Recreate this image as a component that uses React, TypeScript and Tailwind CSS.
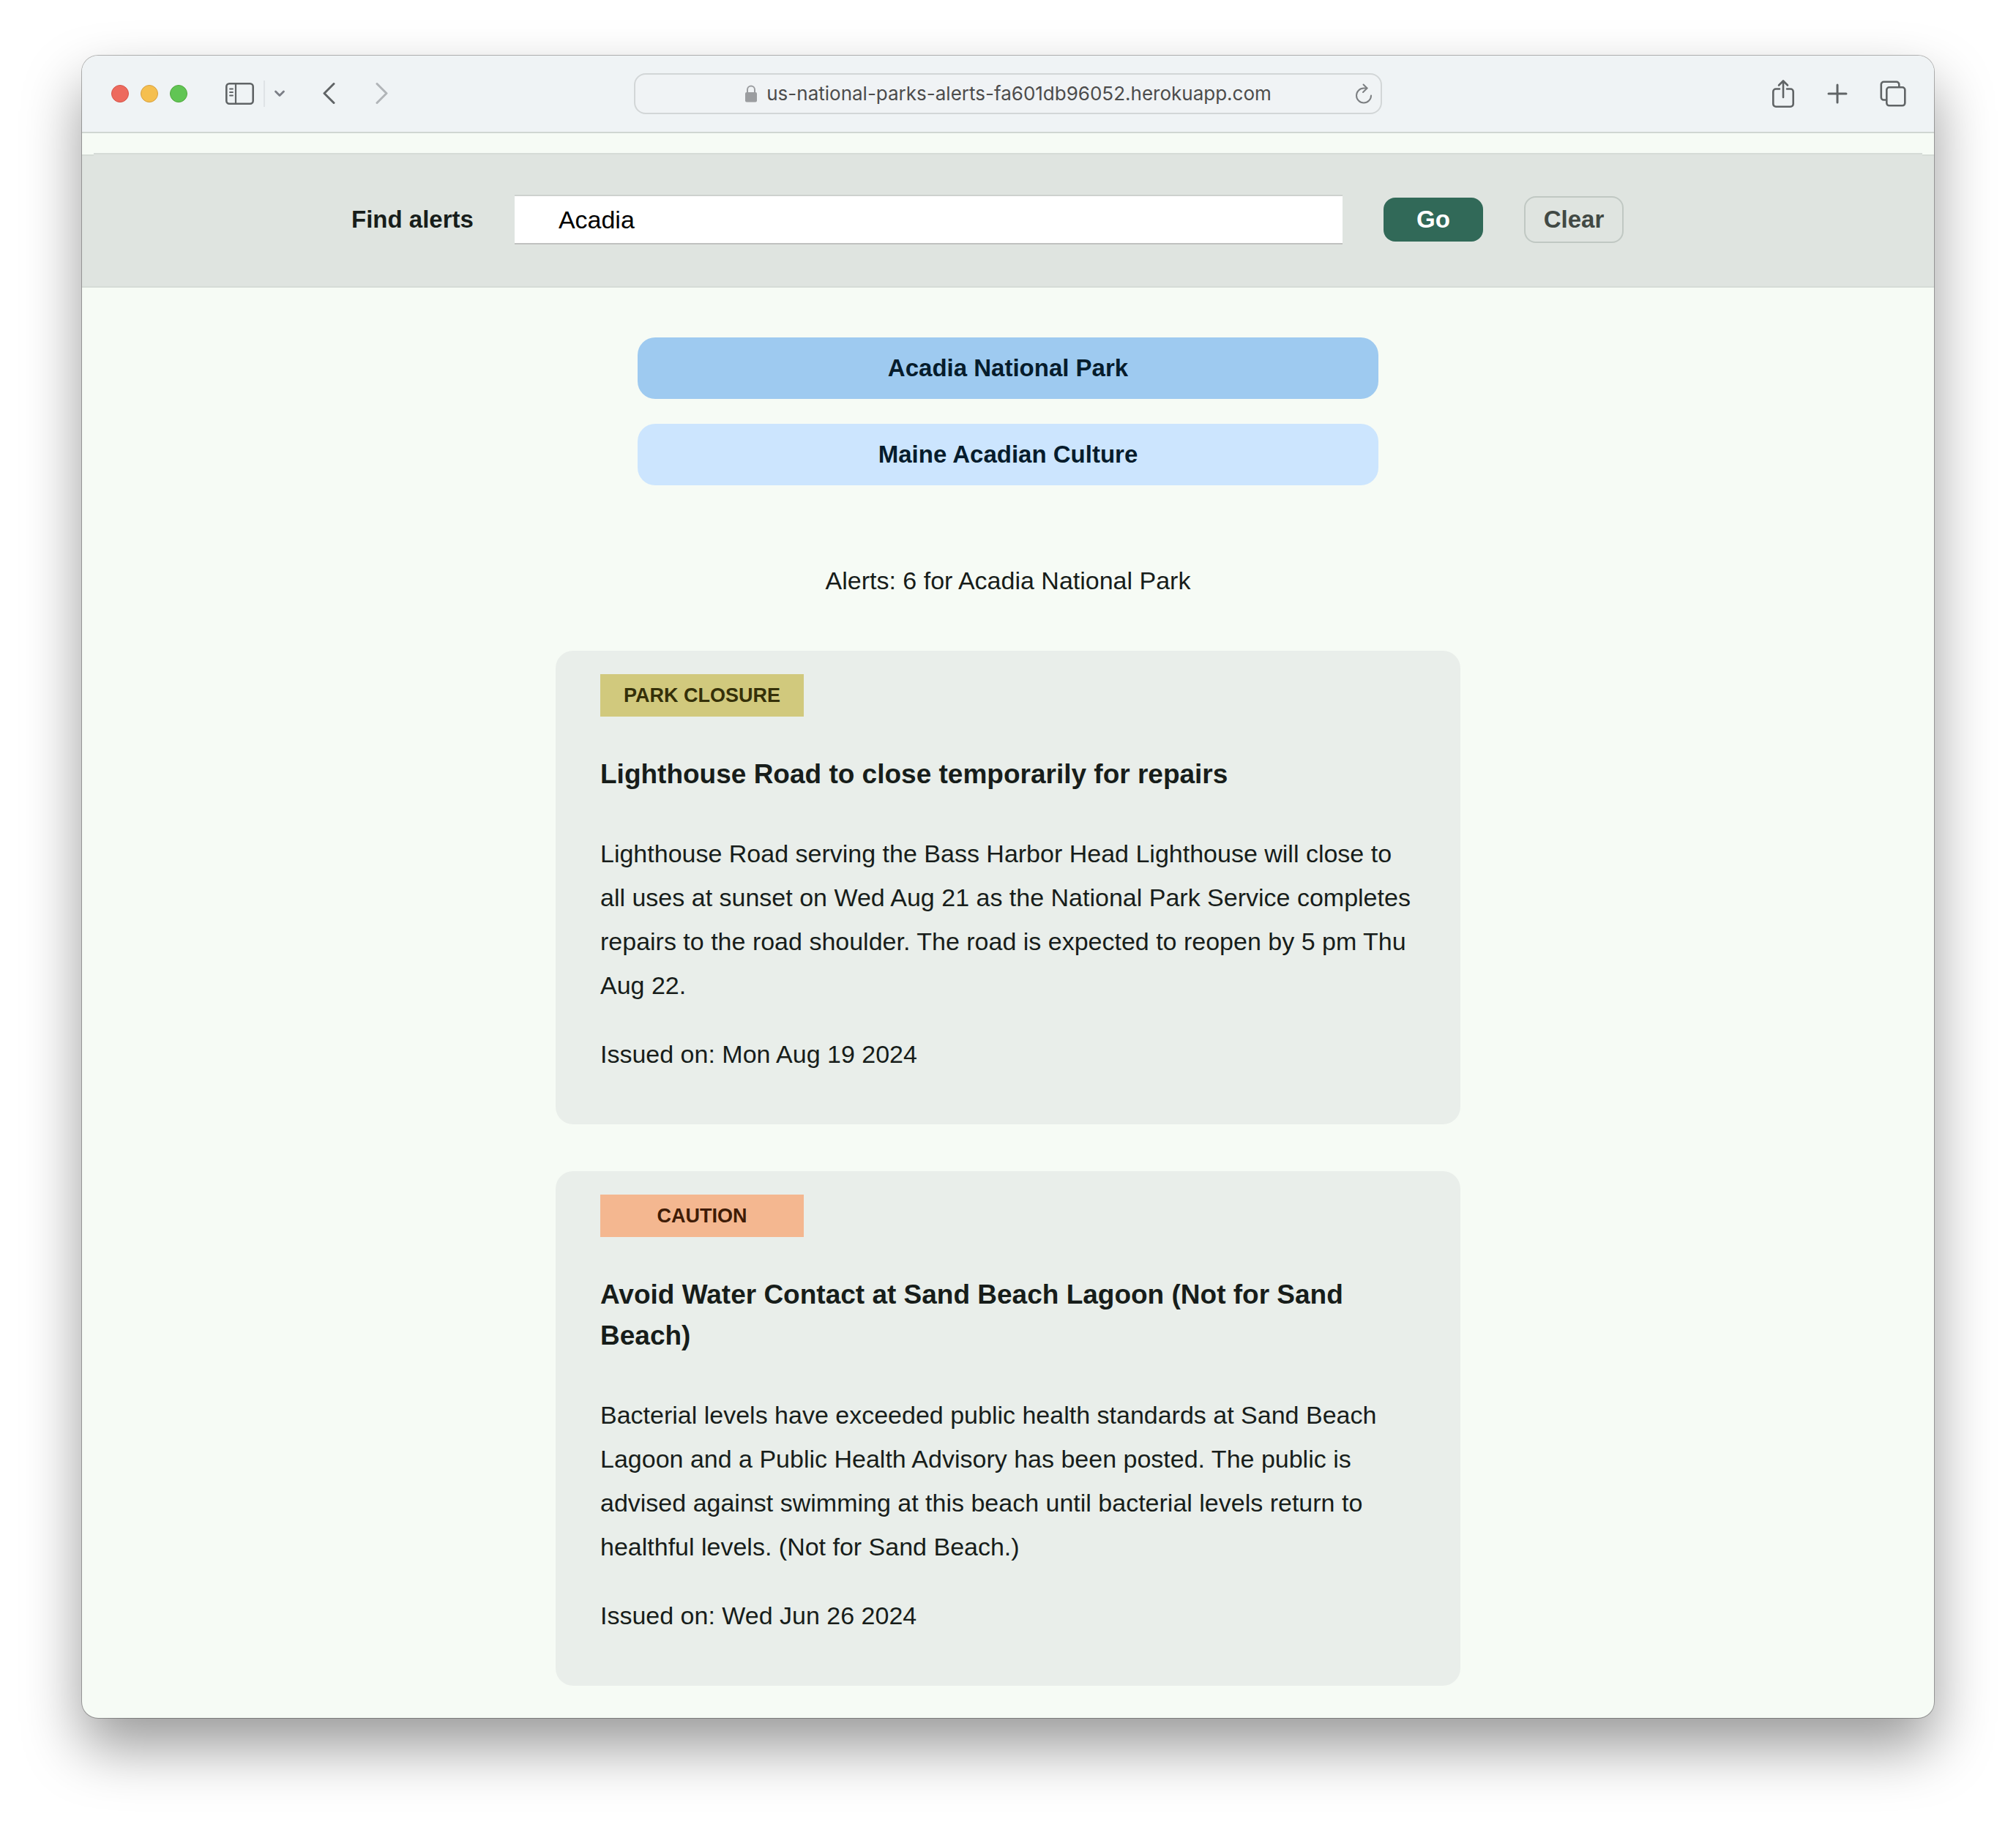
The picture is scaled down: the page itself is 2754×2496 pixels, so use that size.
import React, { useState } from "react";

type Alert = {
  category: string;
  badge: string;
  title: string;
  body: string;
  issued: string;
};

const alerts: Alert[] = [
  {
    category: "Park Closure",
    badge: "bg-[#d1c97d] text-[#353009]",
    title: "Lighthouse Road to close temporarily for repairs",
    body: "Lighthouse Road serving the Bass Harbor Head Lighthouse will close to all uses at sunset on Wed Aug 21 as the National Park Service completes repairs to the road shoulder. The road is expected to reopen by 5 pm Thu Aug 22.",
    issued: "Mon Aug 19 2024",
  },
  {
    category: "Caution",
    badge: "bg-[#f4b790] text-[#3f1c06]",
    title: "Avoid Water Contact at Sand Beach Lagoon (Not for Sand Beach)",
    body: "Bacterial levels have exceeded public health standards at Sand Beach Lagoon and a Public Health Advisory has been posted. The public is advised against swimming at this beach until bacterial levels return to healthful levels. (Not for Sand Beach.)",
    issued: "Wed Jun 26 2024",
  },
];

const parks = ["Acadia National Park", "Maine Acadian Culture"];

function Toolbar() {
  return (
    <header className="grid h-[106px] grid-cols-[1fr_minmax(0,1022px)_1fr] items-center border-b-2 border-[#d0d6d2] bg-[#eff3f5] text-[#606466]">
      <div className="flex items-center pl-10">
        <div className="flex gap-4">
          <button aria-label="Close" className="size-6 rounded-full border border-[#d65549] bg-[#ed6a5e]" />
          <button aria-label="Minimize" className="size-6 rounded-full border border-[#d8a040] bg-[#f5bf4f]" />
          <button aria-label="Zoom" className="size-6 rounded-full border border-[#51a73e] bg-[#61c554]" />
        </div>
        <button aria-label="Show sidebar" className="ml-[52px]">
          <svg width="40" height="30" viewBox="0 0 40 30" fill="none" stroke="currentColor" strokeWidth="2.6" strokeLinecap="round">
            <rect x="1.3" y="1.3" width="36.4" height="27.4" rx="4" />
            <path d="M14 1.5v27" strokeWidth="2.2" />
            <path d="M6 8.5h4M6 13h4M6 17.5h4" strokeWidth="1.8" />
          </svg>
        </button>
        <span className="ml-3 h-9 w-0.5 bg-[#dfe3e6]" />
        <button aria-label="Sidebar options" className="ml-3">
          <svg width="16" height="12" viewBox="0 0 16 12" fill="none" stroke="#7b7e86" strokeWidth="2.8" strokeLinecap="round" strokeLinejoin="round">
            <path d="M2.5 3l5.5 5.5L13.5 3" />
          </svg>
        </button>
        <button aria-label="Back" className="ml-[49px]">
          <svg width="20" height="30" viewBox="0 0 20 30" fill="none" stroke="currentColor" strokeWidth="3" strokeLinecap="round" strokeLinejoin="round">
            <path d="M17 1.500L4 14.500L17 27.500" />
          </svg>
        </button>
        <button aria-label="Forward" disabled className="ml-[53px]">
          <svg width="20" height="30" viewBox="0 0 20 30" fill="none" stroke="#b1b5b8" strokeWidth="3" strokeLinecap="round" strokeLinejoin="round">
            <path d="M3 1.500L16 14.500L3 27.500" />
          </svg>
        </button>
      </div>

      <div className="grid h-14 grid-cols-[1fr_auto_1fr] items-center rounded-2xl border-2 border-[#d2d6d7] bg-[#f0f3f5] px-3">
        <span />
        <a href="#address" className="flex items-center gap-3 font-['Inter',sans-serif] text-[26px] leading-none text-[#4c4c4c]">
          <svg width="18" height="24" viewBox="0 0 18 24" fill="none">
            <rect x="1" y="10" width="16" height="13.5" rx="2" fill="#9b9da0" />
            <path d="M4 11V6.500a5 5 0 0 1 10 0V11" stroke="#9b9da0" strokeWidth="2" />
          </svg>
          us-national-parks-alerts-fa601db96052.herokuapp.com
        </a>
        <button aria-label="Reload" className="justify-self-end">
          <svg width="22" height="28" viewBox="0 0 22 28" fill="none" stroke="#7c7f82" strokeWidth="2" strokeLinecap="round" strokeLinejoin="round">
            <path d="M21 16.500A10 10 0 1 1 11 6.500h4.500" />
            <path d="M10.500 1.500l5 5l-5.500 5.500" />
          </svg>
        </button>
      </div>

      <div className="flex items-center justify-end gap-[43px] pr-[38px]">
        <button aria-label="Share">
          <svg width="32" height="40" viewBox="0 0 32 40" fill="none" stroke="currentColor" strokeWidth="2.6" strokeLinecap="round" strokeLinejoin="round">
            <path d="M11 13.500H6a3.700 3.700 0 0 0-3.700 3.700v16.800a3.700 3.700 0 0 0 3.700 3.700h20a3.700 3.700 0 0 0 3.700-3.700V17.200a3.700 3.700 0 0 0-3.700-3.700h-5" />
            <path d="M16 25V3M10 8.500l6-6l6 6" />
          </svg>
        </button>
        <button aria-label="New tab">
          <svg width="30" height="30" viewBox="0 0 30 30" fill="none" stroke="currentColor" strokeWidth="3" strokeLinecap="round">
            <path d="M15 3v24M3 15h24" />
          </svg>
        </button>
        <button aria-label="Tab overview">
          <svg width="36" height="36" viewBox="0 0 36 36" fill="none" stroke="currentColor" strokeWidth="2.6" strokeLinejoin="round">
            <rect x="9.3" y="9.3" width="25" height="25" rx="3.5" />
            <path d="M9.300 26.500H5.300a3.500 3.500 0 0 1-3.500-3.500V5.300a3.500 3.500 0 0 1 3.500-3.500h17.500a3.500 3.500 0 0 1 3.500 3.500v4" />
          </svg>
        </button>
      </div>
    </header>
  );
}

function SearchBand() {
  const [query, setQuery] = useState("Acadia");
  return (
    <section className="mt-[27px]">
      <div className="mx-4 h-0.5 bg-[#d6dcd7]" />
      <div className="border-b-2 border-[#d6dcd7] bg-[#dfe4e0]">
        <div className="flex h-0.5 justify-between">
          <span className="w-4 bg-[#d6dcd7]" />
          <span className="w-4 bg-[#d6dcd7]" />
        </div>
        <form
          onSubmit={(e) => e.preventDefault()}
          className="mx-auto flex max-w-[1794px] items-center gap-14 pt-[53px] pr-14 pb-[57px]"
        >
          <label htmlFor="park" className="text-[33px] leading-10 font-bold">
            Find alerts
          </label>
          <input
            id="park"
            type="text"
            value={query}
            onChange={(e) => setQuery(e.target.value)}
            className="h-[68px] min-w-0 flex-1 border-t-2 border-b-2 border-t-[#cdd1ce] border-b-[#c0c1c0] bg-white px-[60px] text-[34px] text-black outline-none"
          />
          <button type="submit" className="h-[60px] w-[136px] rounded-2xl bg-[#316958] text-[33px] leading-10 font-bold text-white">
            Go
          </button>
          <button
            type="button"
            onClick={() => setQuery("")}
            className="h-16 w-[136px] rounded-2xl border-2 border-[#c0c8c3] text-[33px] leading-10 font-bold text-[#414944]"
          >
            Clear
          </button>
        </form>
      </div>
    </section>
  );
}

function AlertCard({ alert }: { alert: Alert }) {
  return (
    <article className="rounded-3xl bg-[#e9eeea] px-[61px] pt-8 pb-[66px]">
      <p className={"flex h-[58px] w-[278px] items-center justify-center text-[27px] font-bold uppercase " + alert.badge}>
        {alert.category}
      </p>
      <h2 className="mt-[51px] text-[37px] leading-14 font-bold">{alert.title}</h2>
      <p className="mt-[50px]">{alert.body}</p>
      <p className="mt-[34px]">Issued on: {alert.issued}</p>
    </article>
  );
}

export default function App() {
  const [selected, setSelected] = useState(parks[0]);
  return (
    <div className="min-h-screen bg-white px-28 pt-[76px] pb-[148px] font-['Liberation_Sans',Arial,sans-serif]">
      <div className="overflow-hidden rounded-[22px] bg-[#f6fbf5] text-[#171d1a] shadow-[0_0_0_1px_rgba(0,0,0,0.28),0_40px_80px_rgba(0,0,0,0.4)]">
        <Toolbar />
        <SearchBand />
        <main className="mx-auto flex max-w-[1236px] flex-col pb-11 text-[34px] leading-[60px]">
          <div className="mx-28 mt-[68px] flex flex-col gap-[34px]">
            {parks.map((park) => (
              <button
                key={park}
                onClick={() => setSelected(park)}
                className={
                  "h-[84px] rounded-3xl text-[33px] font-bold text-[#061c2c] " +
                  (park === selected ? "bg-[#9ecaf0]" : "bg-[#cce5fe]")
                }
              >
                {park}
              </button>
            ))}
          </div>
          <p className="mt-[100px] text-center">Alerts: 6 for {selected}</p>
          <div className="mt-[66px] flex flex-col gap-16">
            {alerts.map((alert) => (
              <AlertCard key={alert.title} alert={alert} />
            ))}
          </div>
        </main>
      </div>
    </div>
  );
}
